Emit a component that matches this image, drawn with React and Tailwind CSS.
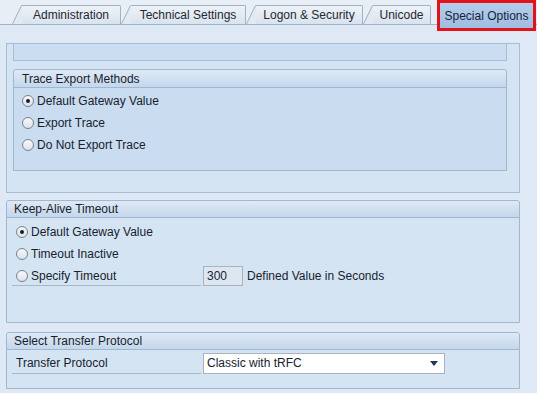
import React from 'react';

const tabs = [
  { label: 'Administration', w: 'w-[99px]' },
  { label: 'Technical Settings', w: 'w-[115px]' },
  { label: 'Logon & Security', w: 'w-[107px]' },
  { label: 'Unicode', w: 'w-[58px]' },
];

function Tab({ label, w }) {
  return <div className="flex items-end h-[19px]">
    <svg width="10" height="19" viewBox="0 0 10 19" className="block">
      <polygon points="0,19 9,0 10,0 10,19" fill="#e2e9f1" />
      <line x1="0.5" y1="19" x2="9.5" y2="0.5" stroke="#9fb2c6" strokeWidth="1" />
    </svg>
    <div className={`${w} h-[19px] border-t border-r border-[#9fb2c6] rounded-tr-[2px] bg-linear-to-b from-[#edf2f7] to-[#d9e3ee] flex items-center justify-center text-[12px] text-[#1f2833]`}>
      {label}
    </div>
  </div>;
}

function Radio({ checked }) {
  return <span className="w-[12px] h-[12px] shrink-0 rounded-full border border-[#77828e] bg-linear-to-b from-[#f7f8fa] to-[#dde3ea] flex items-center justify-center">
    {checked && <span className="w-[4px] h-[4px] rounded-full bg-[#1b1f24]" />}
  </span>;
}

function RadioRow({ checked, label }) {
  return <div className="h-[22px] flex items-center gap-[3px]">
    <Radio checked={checked} />
    <span>{label}</span>
  </div>;
}

function GroupHeader({ title, h, pl }) {
  return <div className={`${h} ${pl} bg-linear-to-b from-[#dfe9f5] to-[#c4d7ec] border-b border-[#9fb7d1] rounded-t-[3px] flex items-center`}>
    {title}
  </div>;
}

export default function App() {
  return <div className="w-[537px] h-[393px] overflow-hidden bg-[#dfe9f5] text-[12px] text-[#18222d] [font-family:'Liberation_Sans',Arial,sans-serif]">
    {/* tab strip */}
    <div className="h-[25px] flex items-end pl-[12px] bg-[#e8eef5] border-b border-[#9fb3c9]">
      {tabs.map(t => <Tab key={t.label} {...t} />)}
      <div className="relative ml-[9px] w-[93px] h-[25px] mb-[-4px] z-10 bg-linear-to-b from-[#b4cdea] to-[#9fbde2] flex items-center justify-center text-[12px] text-[#13243a]">
        Special Options
        <span className="absolute inset-[-3px] border-[3px] border-[#e3121b]" />
      </div>
    </div>

    <div className="px-[6px] pt-[18px]">
      {/* outer frame */}
      <div className="w-[514px] border border-[#a5bdd7] bg-[#d5e4f3] pl-[6px] pr-[12px] pb-[21px]">
        <div className="h-[17px] border-x border-b border-[#a5bdd7] bg-[#cbddf1]" />
        <div className="mt-[8px] border border-[#9fb7d1] rounded-t-[3px]">
          <GroupHeader title="Trace Export Methods" h="h-[18px]" pl="pl-[8px]" />
          <div className="bg-[#cadcf0] pl-[8px] pt-[2px] pb-[14px]">
            <RadioRow checked label="Default Gateway Value" />
            <RadioRow label="Export Trace" />
            <RadioRow label="Do Not Export Trace" />
          </div>
        </div>
      </div>

      {/* keep-alive */}
      <div className="mt-[7px] w-[514px] border border-[#9fb7d1] rounded-t-[3px]">
        <GroupHeader title="Keep-Alive Timeout" h="h-[17px]" pl="pl-[7px]" />
        <div className="bg-[#d4e4f3] pl-[9px] pt-[3px] pb-[35px]">
          <RadioRow checked label="Default Gateway Value" />
          <RadioRow label="Timeout Inactive" />
          <div className="h-[22px] flex items-center ml-[-4px]">
            <div className="w-[189px] h-[20px] border-b border-[#aab8c6] pl-[4px] flex items-center gap-[3px]">
              <Radio />
              <span>Specify Timeout</span>
            </div>
            <div className="ml-[2px] w-[40px] h-[20px] border border-[#a7b3bf] bg-[#dce7f2] pl-[3px] flex items-center">300</div>
            <span className="ml-[4px]">Defined Value in Seconds</span>
          </div>
        </div>
      </div>

      {/* transfer protocol */}
      <div className="mt-[9px] w-[514px] border border-[#9fb7d1] rounded-t-[3px]">
        <GroupHeader title="Select Transfer Protocol" h="h-[17px]" pl="pl-[7px]" />
        <div className="bg-[#d4e4f3] pl-[5px] pt-[2px] pb-[14px]">
          <div className="h-[22px] flex items-center">
            <div className="w-[189px] h-[21px] border-b border-[#aab8c6] pl-[4px] flex items-center">Transfer Protocol</div>
            <div className="ml-[2px] w-[242px] h-[21px] border border-[#a7b3bf] bg-white pl-[3px] pr-[6px] flex items-center justify-between">
              <span>Classic with tRFC</span>
              <svg width="8" height="5" viewBox="0 0 8 5"><polygon points="0,0 8,0 4,5" fill="#1f3552" /></svg>
            </div>
          </div>
        </div>
      </div>
    </div>
  </div>;
}
